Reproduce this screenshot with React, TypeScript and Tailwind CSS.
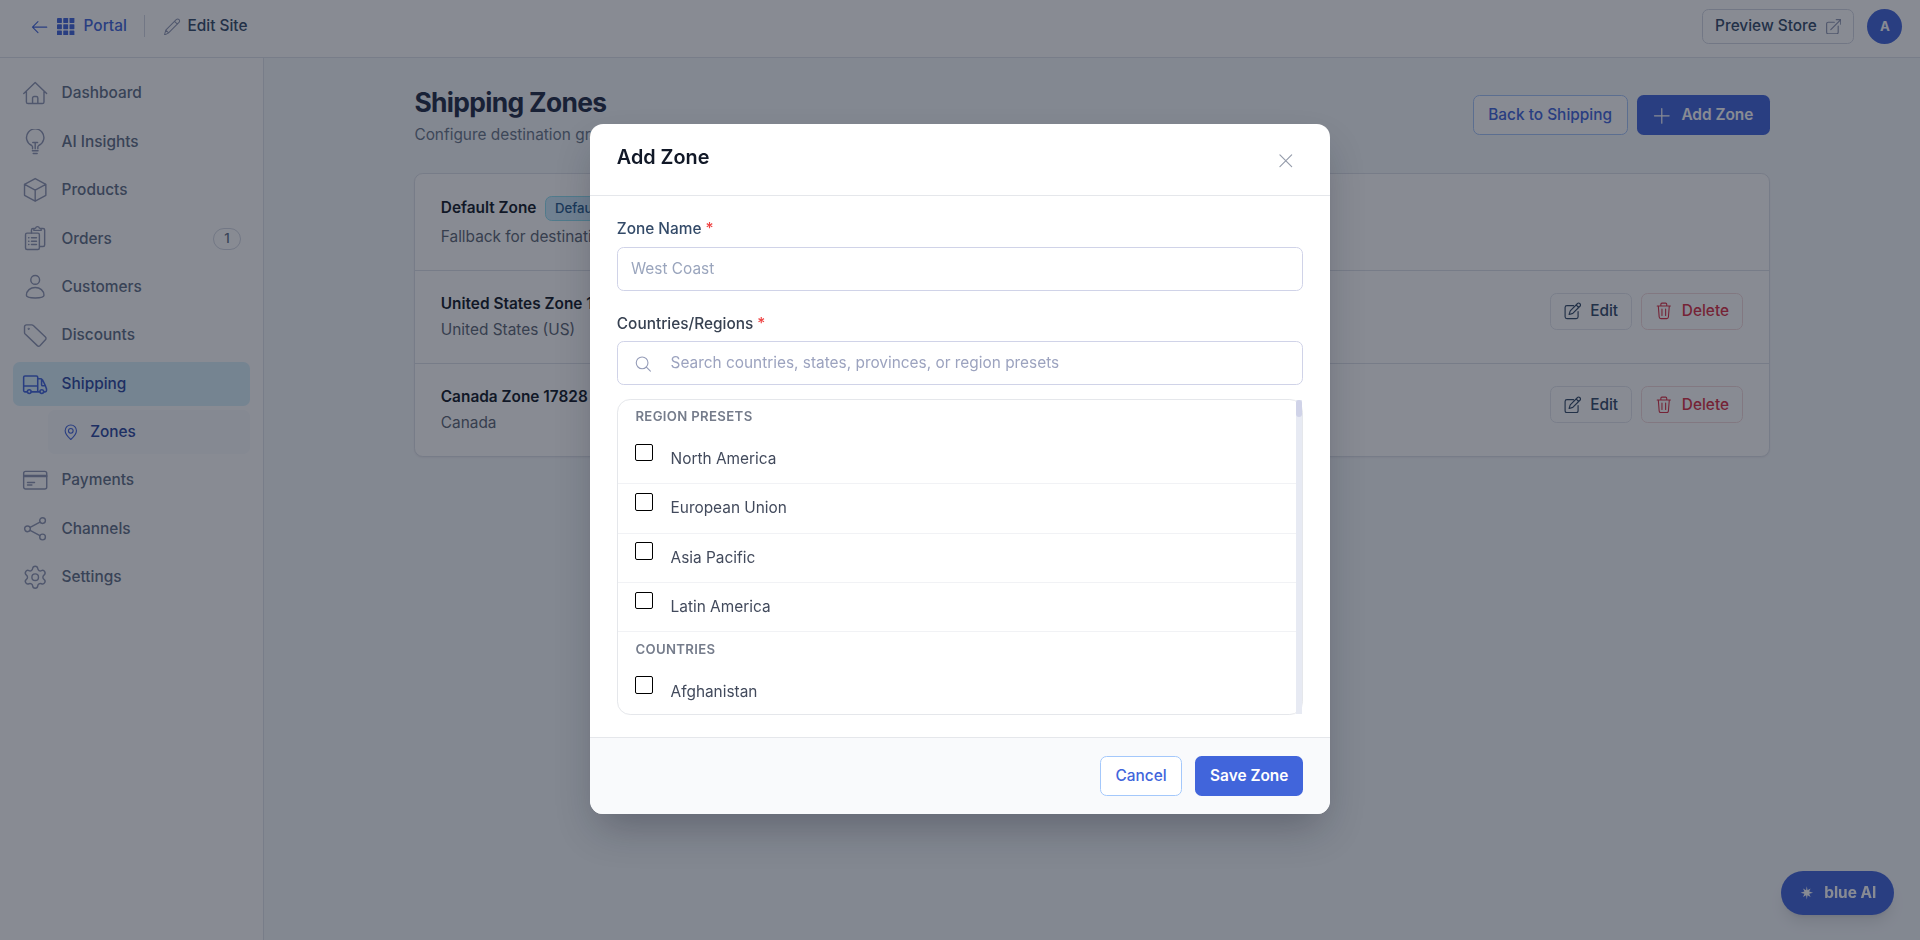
import React from 'react';
import { Settings } from 'lucide-react';

interface IconProps {
  className?: string;
  strokeWidth?: number;
  children: React.ReactNode;
}

const Icon: React.FC<IconProps> = ({ className = 'size-6', strokeWidth = 1.3, children }) => (
  <svg
    viewBox="0 0 24 24"
    fill="none"
    stroke="currentColor"
    strokeWidth={strokeWidth}
    strokeLinecap="round"
    strokeLinejoin="round"
    className={`shrink-0 ${className}`}
  >
    {children}
  </svg>
);

interface NavItem {
  label: string;
  icon: React.ReactNode;
  active?: boolean;
  badge?: number;
}

const navItems: NavItem[] = [
  {
    label: 'Dashboard',
    icon: (
      <Icon>
        <path d="M1.6 12.2 12 2.2l10.4 10M4 10.3v9.6c0 .9.6 1.5 1.5 1.5h13c.9 0 1.5-.6 1.5-1.5v-9.6M9.6 21.4v-5c0-.8.6-1.4 1.4-1.4h2c.8 0 1.4.6 1.4 1.4v5" />
      </Icon>
    ),
  },
  {
    label: 'AI Insights',
    icon: (
      <Icon>
        <path d="M9.6 18v-1.600c0-.6-.3-1.100-.8-1.400a7.900 7.900 0 1 1 6.400 0c-.5.300-.8.800-.8 1.400V18M12 18v-5.800M9.800 12.200h4.400M9.400 19.800h5.200M10.200 22.200h3.600" />
      </Icon>
    ),
  },
  {
    label: 'Products',
    icon: (
      <Icon>
        <path d="m12 1.4 9.7 5.2v10L12 22l-9.700-5.400v-10L12 1.400ZM2.400 6.700l9.600 5.200 9.600-5.200M12 11.900V22" />
      </Icon>
    ),
  },
  {
    label: 'Orders',
    badge: 1,
    icon: (
      <Icon>
        <rect x="3.2" y="7.4" width="12.6" height="14.9" rx="1.4" />
        <path d="M8.6 7.2V4.6c0-.8.6-1.4 1.4-1.4h.6M17.4 3.2h1.8c.8 0 1.4.6 1.4 1.4v13.6c0 .8-.6 1.4-1.4 1.4h-3.2M10.8 4.9V3.4l1.5-.5c.3-.9 1-1.4 1.8-1.4s1.5.5 1.8 1.4l1.5.5v1.5zM8.6 11.6h4.6M8.6 14.7h4.6M8.6 17.8h4.6M6 11.6h.3M6 14.7h.3M6 17.8h.3" />
      </Icon>
    ),
  },
  {
    label: 'Customers',
    icon: (
      <Icon>
        <circle cx="12" cy="5.4" r="4" />
        <path d="M12 12.2c-4.4 0-8 3-8 7.2 0 1.6 3.6 2.4 8 2.4s8-.8 8-2.4c0-4.2-3.6-7.2-8-7.2Z" />
      </Icon>
    ),
  },
  {
    label: 'Discounts',
    icon: (
      <Icon>
        <path d="M2.3 4.3c0-1 .7-1.7 1.7-1.7h4.8c.6 0 1.1.2 1.5.6l11 10.500c.7.7.7 1.700 0 2.400l-5 5.400c-.7.7-1.700.7-2.400 0L2.900 11c-.4-.4-.6-.9-.6-1.500V4.300Z" />
        <circle cx="6.1" cy="6.2" r=".4" />
      </Icon>
    ),
  },
  {
    label: 'Shipping',
    active: true,
    icon: (
      <Icon strokeWidth={1.4}>
        <path d="M4.800 19H2.700c-.7 0-1.200-.5-1.200-1.200V5.700c0-.7.5-1.200 1.200-1.200h10.400c.7 0 1.200.5 1.200 1.200V19M1.500 13.600h12.800M8.400 19h7.800M14.300 7h2.500c.8 0 1.400.4 1.800 1.100 1.600 3 2.900 5.300 3.700 8.200v1.500c0 .7-.5 1.200-1.200 1.200h-1.300M17.800 7.300v5.200c0 .6.400 1 1 1h2" />
        <circle cx="6.6" cy="18.7" r="1.7" />
        <circle cx="18" cy="18.7" r="1.7" />
      </Icon>
    ),
  },
  {
    label: 'Payments',
    icon: (
      <Icon>
        <rect x="1.5" y="4" width="21" height="16" rx="1.8" />
        <path d="M1.5 7.6h21M1.5 8.600h21M5 14.100h6.400M5 16.400h4" />
      </Icon>
    ),
  },
  {
    label: 'Channels',
    icon: (
      <Icon>
        <circle cx="5" cy="11.7" r="2.6" />
        <circle cx="18.7" cy="4.2" r="2.6" />
        <circle cx="18.7" cy="19.1" r="2.6" />
        <path d="m7.400 10.400 8.900-4.900M7.400 13l8.900 4.800" />
      </Icon>
    ),
  },
  {
    label: 'Settings',
    icon: <Settings className="size-6 shrink-0" strokeWidth={1.3} />,
  },
];

const zones = [
  { name: 'Default Zone', detail: 'Fallback for destinations', isDefault: true },
  { name: 'United States Zone 1782', detail: 'United States (US)', isDefault: false },
  { name: 'Canada Zone 17828', detail: 'Canada', isDefault: false },
];

const presets = ['North America', 'European Union', 'Asia Pacific', 'Latin America'];
const countries = ['Afghanistan'];

const TopBar: React.FC = () => (
  <header className="flex items-center justify-between border-b border-[#dfe3ea] bg-white px-4 pt-2 pb-3 text-sm font-medium shadow-xs">
    <div className="flex items-center gap-1">
      <a className="flex items-center gap-2 px-3 text-[#4165db]">
        <Icon className="size-4" strokeWidth={1.5}>
          <path d="M21.500 12.500h-19M9.500 5l-7.500 7.500 7.500 7.500" />
        </Icon>
        <svg viewBox="0 0 18 18" fill="currentColor" className="size-4">
          {[0, 6.4, 12.8].map((y) =>
            [0, 6.4, 12.8].map((x) => (
              <rect key={`${x}-${y}`} x={x} y={y} width="5" height="5" rx="0.5" />
            ))
          )}
        </svg>
        Portal
      </a>
      <span className="h-5 w-px bg-[#d3d7e2]" />
      <a className="flex items-center gap-[7px] px-3 text-[#334a68]">
        <Icon className="size-4 text-[#8f97b3]" strokeWidth={1.4}>
          <path d="m2 23.300 1.800-6.800L18 2.300c1.200-1.200 2.800-1.200 3.900-.1s1.100 2.700-.1 3.900L7.600 20.300 2 23.300ZM15.800 4.500l3.800 3.800M3.800 16.500l3.800 3.800" />
        </Icon>
        Edit Site
      </a>
    </div>
    <div className="flex items-center gap-3">
      <button className="flex h-[34.6px] w-[152px] items-center justify-center gap-2 rounded-md border border-[#d3d7e2] text-[#334a68]">
        Preview Store
        <Icon className="size-3.5 text-[#8f97b3]" strokeWidth={1.8}>
          <path d="M13 5H3.500C2.100 5 1 6.100 1 7.500v13C1 21.900 2.100 23 3.500 23h13c1.400 0 2.500-1.100 2.500-2.500V11M7.500 16.500 23 1M16 1h7v7" />
        </Icon>
      </button>
      <span className="flex size-8 items-center justify-center rounded-full bg-[#4165db] text-xs font-bold text-white">
        A
      </span>
    </div>
  </header>
);

const Sidebar: React.FC = () => (
  <aside className="w-60 shrink-0 border-r border-[#dfe3ea] bg-white p-3">
    <nav className="flex flex-col gap-1 text-sm font-medium text-[#5f6e86]">
      {navItems.map((item) => (
        <React.Fragment key={item.label}>
          <a
            className={`flex h-10 items-center gap-3 rounded-md px-2 ${
              item.active ? 'bg-[#d9f0fb] text-[#2b479f]' : ''
            }`}
          >
            <span className={item.active ? 'text-[#4165db]' : 'text-[#8f97b3]'}>{item.icon}</span>
            {item.label}
            {item.badge && (
              <span className="ml-auto flex h-[22px] w-[28px] items-center justify-center rounded-full border border-[#d3d7e2] text-xs">
                {item.badge}
              </span>
            )}
          </a>
          {item.active && (
            <a className="ml-8 flex h-10 items-center gap-2.5 rounded-md bg-[#f8fafd] px-3 text-[#2b479f]">
              <Icon className="size-4 text-[#4165db]" strokeWidth={1.5}>
                <path d="M12 22.500c-3.500-3-7.700-7-7.700-11.800C4.300 6 7.700 2.700 12 2.700s7.700 3.300 7.700 8c0 4.800-4.200 8.800-7.700 11.800Z" />
                <circle cx="12" cy="10.7" r="3.2" />
              </Icon>
              Zones
            </a>
          )}
        </React.Fragment>
      ))}
    </nav>
  </aside>
);

const ZoneActions: React.FC = () => (
  <div className="flex gap-[9px] text-sm font-medium">
    <button className="flex items-center gap-2 rounded-md border border-[#e2e5ec] px-3 py-1.5 text-[#334a68]">
      <Icon className="size-4" strokeWidth={1.6}>
        <path d="M13 5H4C2.600 5 1.500 6.100 1.500 7.500v12.700c0 1.400 1.100 2.500 2.500 2.500h12.700c1.400 0 2.500-1.100 2.500-2.500V13M7 17l1.500-5 10-10c.8-.8 2-.8 2.800 0l.7.7c.8.8.8 2 0 2.800l-10 10L7 17ZM16.500 4l3.500 3.500" />
      </Icon>
      Edit
    </button>
    <button className="flex items-center gap-2 rounded-md border border-[#f3d9db] px-3 py-1.5 text-[#d92f45]">
      <Icon className="size-4" strokeWidth={1.5}>
        <path d="M3 5.500h18M8 5.500V3c0-.8.6-1.500 1.500-1.500h5c.9 0 1.500.7 1.500 1.500v2.500M4.500 5.500l1.200 15c.1 1.300 1 2.200 2.300 2.200h8c1.300 0 2.200-.9 2.300-2.200l1.200-15M9.500 9.500v9M14.500 9.500v9" />
      </Icon>
      Delete
    </button>
  </div>
);

const ZonesPage: React.FC = () => (
  <main className="flex-1 bg-[#f5f8fb]">
    <div className="mx-auto max-w-7xl p-6">
      <div className="mb-6 flex items-center justify-between">
        <div>
          <h1 className="text-2xl font-bold tracking-tight text-[#1f2a44]">Shipping Zones</h1>
          <p className="mt-1 text-sm text-[#697789]">Configure destination groups</p>
        </div>
        <div className="flex gap-[9px] text-sm font-medium">
          <button className="h-[40px] w-[155px] rounded-md border border-[#a4c4f8] bg-white text-[#4165db]">
            Back to Shipping
          </button>
          <button className="flex h-[40px] w-[133px] items-center justify-center gap-[11px] rounded-md bg-[#4165db] font-semibold text-white">
            <Icon className="size-4" strokeWidth={1.6}>
              <path d="M12 2v20M2 12h20" />
            </Icon>
            Add Zone
          </button>
        </div>
      </div>
      <section className="divide-y divide-[#dde1e8] rounded-lg border border-[#dde1e8] bg-white shadow-xs">
        {zones.map((zone) => (
          <div key={zone.name} className="flex items-start justify-between px-[25.4px] py-5">
            <div>
              <div className="flex items-center gap-2 text-sm">
                <span className="font-semibold text-[#111827]">{zone.name}</span>
                {zone.isDefault && (
                  <span className="rounded-md border border-[#8edff0] bg-[#cfeafb] px-2 py-[3px] text-xs font-medium text-[#255a8c]">
                    Default
                  </span>
                )}
              </div>
              <p className="mt-1 text-sm text-[#5c6675]">{zone.detail}</p>
            </div>
            {!zone.isDefault && <ZoneActions />}
          </div>
        ))}
      </section>
    </div>
  </main>
);

const OptionGroup: React.FC<{ title: string; options: string[] }> = ({ title, options }) => (
  <div>
    <p className="px-4 py-2 text-xs font-semibold tracking-wide text-[#757c8b] uppercase">{title}</p>
    {options.map((option) => (
      <label
        key={option}
        className="flex items-start gap-4 border-b border-[#f1f2f5] px-4 py-3 text-sm text-[#424a5c]"
      >
        <input
          type="checkbox"
          className="-mt-1 size-4 shrink-0 appearance-none rounded-[2px] border border-black bg-white"
        />
        {option}
      </label>
    ))}
  </div>
);

const AddZoneModal: React.FC = () => (
  <div className="fixed inset-0 flex items-center justify-center bg-[#111827]/50">
    <div className="mb-[2px] w-full max-w-2xl overflow-hidden rounded-xl bg-white shadow-[0_20px_40px_-8px_rgba(17,24,39,0.3)]">
      <div className="flex h-[71.8px] items-start justify-between border-b border-[#e5e7eb] px-6 pt-5">
        <h2 className="-mt-[2px] text-lg leading-6 font-semibold text-[#111827]">Add Zone</h2>
        <button className="mt-[5.5px] mr-2 text-[#959cab]">
          <Icon className="size-4" strokeWidth={1.6}>
            <path d="m4 4 16 16M20 4 4 20" />
          </Icon>
        </button>
      </div>
      <div className="space-y-5 px-6 py-5">
        <div>
          <p className="mb-1.5 text-sm font-medium text-[#334a68]">
            Zone Name <span className="text-[#ef4444]">*</span>
          </p>
          <input
            placeholder="West Coast"
            className="block h-[44px] w-full rounded-md border border-[#d0d3e8] px-[13.2px] text-sm placeholder:text-[#9aa5bd]"
          />
        </div>
        <div>
          <p className="mb-1.5 text-sm font-medium text-[#374151]">
            Countries/Regions <span className="text-[#ef4444]">*</span>
          </p>
          <div className="flex h-[44px] items-center gap-4 rounded-md border border-[#d0d3e8] px-4">
            <Icon className="size-4 text-[#959cb8]" strokeWidth={1.5}>
              <circle cx="9.7" cy="10.7" r="8" />
              <path d="m15.500 16.500 5.500 5.500" />
            </Icon>
            <input
              placeholder="Search countries, states, provinces, or region presets"
              className="w-full text-sm placeholder:text-[#9ca3bf]"
            />
          </div>
          <div className="mt-3 flex h-72 rounded-xl border border-[#e5e7eb]">
            <div className="flex-1 overflow-hidden">
              <OptionGroup title="Region presets" options={presets} />
              <OptionGroup title="Countries" options={countries} />
            </div>
            <div className="w-[6px] bg-[#e7eaf3]">
              <div className="h-[17px] rounded-full bg-[#d0d3e8]" />
            </div>
          </div>
        </div>
      </div>
      <div className="flex justify-end gap-3 border-t border-[#e5e7eb] bg-[#f9fafc] px-6 py-4 text-sm">
        <button className="h-[40px] w-[82px] rounded-md border border-[#a4c8fb] bg-white font-medium text-[#4165db]">
          Cancel
        </button>
        <button className="h-[40px] w-[108px] rounded-md bg-[#4165db] font-semibold text-white">
          Save Zone
        </button>
      </div>
    </div>
  </div>
);

const App: React.FC = () => {
  return (
    <div className="flex h-screen flex-col overflow-hidden font-[Inter,sans-serif]">
      {/* the whole interface scales from a 110% root size */}
      <style>{'html { font-size: 110%; }'}</style>
      <TopBar />
      <div className="flex flex-1">
        <Sidebar />
        <ZonesPage />
      </div>
      <button className="fixed right-6 bottom-[25px] flex h-[44px] w-[113px] items-center justify-center gap-2 rounded-full bg-[#4165db] text-sm font-bold text-white shadow-lg">
        <svg viewBox="0 0 24 24" fill="currentColor" className="size-4">
          <path d="M12 3l1 5.500 4.200-2.300-2 4.200 5.300 1.600-5.300 1.400 2 4.400-4.200-2.300L12 21l-1-5.500-4.200 2.300 2-4.400L3.500 12l5.300-1.600-2-4.200L11 8.500 12 3Z" />
        </svg>
        blue AI
      </button>
      <AddZoneModal />
    </div>
  );
};

export default App;
